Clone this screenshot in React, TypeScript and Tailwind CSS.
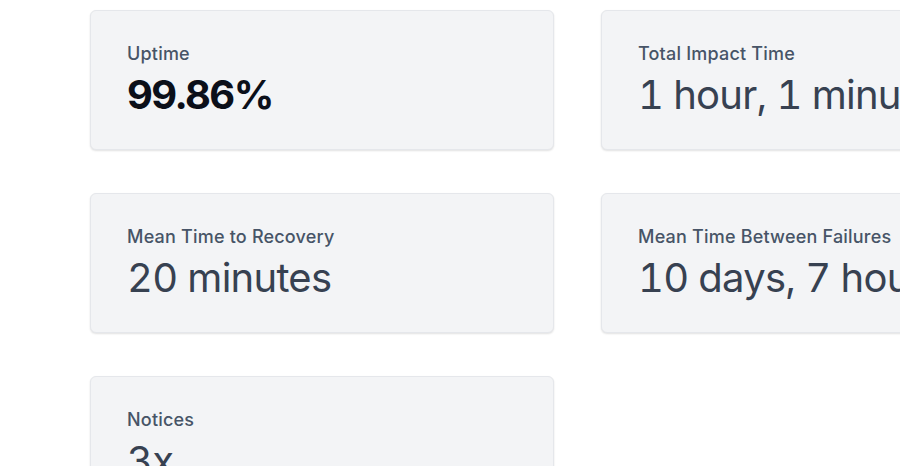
import React from "react";

const cards = [
  { label: "Uptime", value: "99.86%", bold: true },
  { label: "Total Impact Time", value: "1 hour, 1 minute" },
  { label: "Mean Time to Recovery", value: "20 minutes" },
  { label: "Mean Time Between Failures", value: "10 days, 7 hours" },
  { label: "Notices", value: "3x" },
];

export default function App() {
  return (
    <div
      className="w-[900px] h-[466px] overflow-hidden bg-white"
      style={{ fontFamily: "Inter, 'Noto Sans', sans-serif" }}
    >
      <div className="pl-[90px] pt-[10px] grid grid-cols-[464px_464px] gap-x-[47px] gap-y-[43px] w-max">
        {cards.map((c) => (
          <div
            key={c.label}
            className="h-[140px] rounded-md border border-gray-200 bg-[#f3f4f6] shadow-[0_1px_2px_rgba(0,0,0,0.12)] pl-[36px] pt-[29px] overflow-hidden"
          >
            <div className="text-[18px] leading-[28px] font-medium tracking-[0.2px] text-[#475467] whitespace-nowrap">
              {c.label}
            </div>
            <div
              className={
                c.bold
                  ? "mt-[7px] text-[40px] leading-[40px] font-bold tracking-[-1.5px] tabular-nums text-[#0b0f19] whitespace-nowrap"
                  : "mt-[7px] text-[40px] leading-[40px] font-normal tracking-[-0.75px] tabular-nums text-[#374151] whitespace-nowrap"
              }
            >
              {c.value}
            </div>
          </div>
        ))}
      </div>
    </div>
  );
}
